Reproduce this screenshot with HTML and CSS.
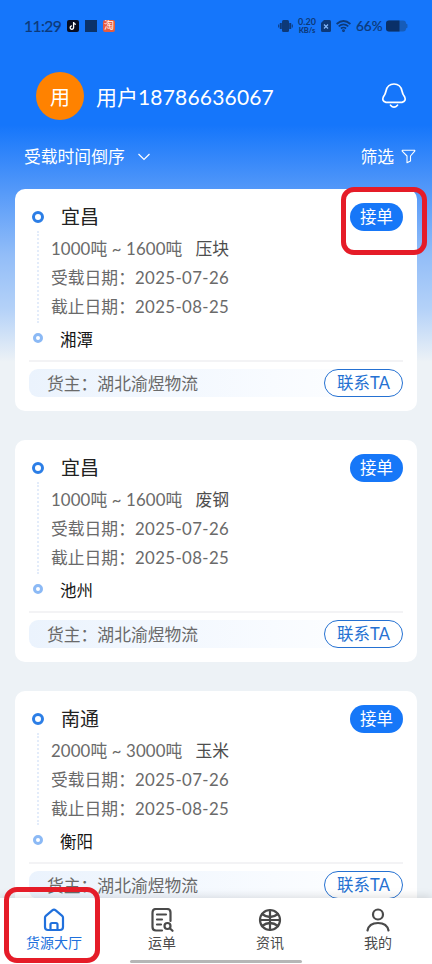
FILE: index.html
```html
<!DOCTYPE html>
<html lang="zh-CN">
<head>
<meta charset="UTF-8">
<meta name="viewport" content="width=device-width, initial-scale=1">
<title>货源大厅</title>
<link rel="stylesheet" href="styles.css">
</head>
<body>
<div class="app">
  <header class="status">
    <span class="clock">11:29</span>
    <svg class="app-icon" viewBox="0 0 12 12"><rect width="12" height="12" rx="2" fill="#080d20"/><path d="M6.600 2v5.600a1.700 1.700 0 1 1-1.600-1.700M6.600 2.400c.2 1.200 1 1.800 2.300 1.900" fill="none" stroke="#fff" stroke-width="1.300"/></svg>
    <span class="square"></span>
    <span class="shop">淘</span>
    <div class="status-right">
      <svg width="15" height="14" viewBox="0 0 15 14" fill="#0d3978"><rect x="4" y="1" width="7" height="12" rx="1.500"/><path d="M1.800 4h2v6h-2zM11.200 4h2v6h-2zM.2 5.500h1v3h-1zM13.800 5.500h1v3h-1z"/></svg>
      <span class="speed">0.20<br><b>KB/s</b></span>
      <svg class="sim" width="10" height="12" viewBox="0 0 10 12"><path d="M3 0h5.500Q10 0 10 1.500v9Q10 12 8.500 12h-7Q0 12 0 10.500V3z" fill="#0d3978"/><path d="M3 4.500l4 4m0-4l-4 4" stroke="#83b7fa" stroke-width="1.200"/></svg>
      <svg class="wifi" width="15" height="12" viewBox="0 0 15 12" fill="none" stroke="#0d3978" stroke-width="1.700"><path d="M.6 4Q7.500-2 14.400 4M2.700 6.300q4.800-4 9.600 0M4.900 8.500q2.600-2 5.200 0"/><circle cx="7.500" cy="10.600" r=".6"/></svg>
      <span class="percent">66%</span>
      <svg width="22" height="12" viewBox="0 0 22 12"><path d="M3 .5h14q3 0 3 3l1.500 1v3l-1.500 1q0 3-3 3H3q-3 0-3-3v-5q0-3 3-3z" fill="#165cb9"/><path d="M3 .5h10.500v11H3q-3 0-3-3v-5q0-3 3-3z" fill="#0a3068"/></svg>
    </div>
  </header>
  <section class="profile">
    <span class="avatar">用</span>
    <span class="username">用户<span class="digits">18786636067</span></span>
    <svg class="bell" width="26" height="28" viewBox="0 0 26 28" fill="none" stroke="#fff" stroke-width="1.700" stroke-linecap="round"><path d="M5 20.300h16q4.500-1 2.700-5.300Q21.500 12 21 9 19.500 2 13 2T5 9q-.5 3-2.700 6-1.800 4.300 2.700 5.300z"/><path d="M9.500 23.200q3.500 4 7 0"/></svg>
  </section>
  <section class="filters">
    <span>受载时间倒序</span>
    <svg class="chevron" width="12" height="8" viewBox="0 0 12 8" fill="none" stroke="#fff" stroke-width="1.200"><path d="M.5 1L6 6.500 11.500 1"/></svg>
    <span class="filter">筛选</span>
    <svg class="funnel" width="15" height="15" viewBox="0 0 15 15" fill="none" stroke="#fff" stroke-width="1.100" stroke-linejoin="round"><path d="M1.500 1.200h12q.6.400.2 1L9.500 7v5L6 13.800V7L1.200 2.200q-.3-.6.300-1z"/></svg>
  </section>
  <main class="list">
    <article class="card">
      <div class="row"><i class="dot"></i><h2>宜昌</h2><button class="accept">接单</button></div>
      <div class="details">
        <p>1000吨 ~ 1600吨<span class="goods">压块</span></p>
        <p>受载日期：<span class="date">2025-07-26</span></p>
        <p>截止日期：<span class="date">2025-08-25</span></p>
      </div>
      <div class="row end"><i class="dot light"></i><h3>湘潭</h3></div>
      <div class="owner"><span>货主：湖北渝煜物流</span><button class="contact">联系TA</button></div>
    </article>
    <article class="card">
      <div class="row"><i class="dot"></i><h2>宜昌</h2><button class="accept">接单</button></div>
      <div class="details">
        <p>1000吨 ~ 1600吨<span class="goods">废钢</span></p>
        <p>受载日期：<span class="date">2025-07-26</span></p>
        <p>截止日期：<span class="date">2025-08-25</span></p>
      </div>
      <div class="row end"><i class="dot light"></i><h3>池州</h3></div>
      <div class="owner"><span>货主：湖北渝煜物流</span><button class="contact">联系TA</button></div>
    </article>
    <article class="card">
      <div class="row"><i class="dot"></i><h2>南通</h2><button class="accept">接单</button></div>
      <div class="details">
        <p>2000吨 ~ 3000吨<span class="goods">玉米</span></p>
        <p>受载日期：<span class="date">2025-07-26</span></p>
        <p>截止日期：<span class="date">2025-08-25</span></p>
      </div>
      <div class="row end"><i class="dot light"></i><h3>衡阳</h3></div>
      <div class="owner"><span>货主：湖北渝煜物流</span><button class="contact">联系TA</button></div>
    </article>
  </main>
  <nav class="tabs">
    <a class="tab active"><svg viewBox="0 0 24 24"><path d="M3 9.500q0-1 .8-1.700L10.300 2.300q1.700-1.400 3.400 0l6.500 5.500q.8.700.8 1.700V19q0 3-3 3H6q-3 0-3-3zM8.500 22v-5.500q0-1.500 1.500-1.500h4q1.500 0 1.500 1.500V22"/></svg>货源大厅</a>
    <a class="tab"><svg viewBox="0 0 24 24"><path d="M12 22.500H6q-3.500 0-3.500-3.500V5Q2.500 1 6 1h11q3.500 0 3.500 3.500V13M7 6.500h9M7 11.500h5M7 16.500h4"/><circle cx="17.500" cy="18" r="3"/><path d="M19.800 20.300l2.700 2.500"/></svg>运单</a>
    <a class="tab"><svg viewBox="0 0 24 24"><circle cx="12" cy="12" r="10"/><path d="M12 2v20M2.500 12h19M4 6q8 6 16 0M4 18q8-6 16 0"/></svg>资讯</a>
    <a class="tab"><svg viewBox="0 0 24 24"><circle cx="12" cy="6.500" r="5"/><path d="M1.500 22.500q1.500-7.500 10.500-7.500t10.500 7.500"/></svg>我的</a>
    <span class="home-bar"></span>
  </nav>
  <span class="mark mark-accept"></span>
  <span class="mark mark-tab"></span>
</div>
</body>
</html>
```
FILE: styles.css
```css
* { box-sizing: border-box; }
body { margin: 0; font-family: Lato, "Noto Sans CJK SC", sans-serif; }
h2, h3, p { margin: 0; font-weight: 400; }
svg { display: block; flex: none; }
button { font: inherit; padding: 0; border: 0; flex: none; }

.app {
  position: relative;
  width: 432px;
  height: 964px;
  overflow: hidden;
  background: linear-gradient(#1576fb 0, #1576fb 125px, #4a93f9 180px, #92bdf8 255px, #b5d2f8 310px, #edf2f6 362px);
  display: flex;
  flex-direction: column;
}

.status { height: 52px; padding: 0 24px; display: flex; align-items: center; color: #0d3978; flex: none; }
.clock { width: 43px; padding-bottom: 1px; font-size: 15.500px; letter-spacing: -.5px; -webkit-text-stroke: .2px #0d3978; }
.clock, .percent { font-family: Lato, sans-serif; }
.app-icon { width: 12px; height: 12px; }
.square { width: 12px; height: 12px; margin: 0 6px; background: #0b3268; }
.shop { width: 12px; height: 12px; border-radius: 2px; background: #e65c3e; color: #fff; font-size: 10px; line-height: 11px; text-align: center; }
.status-right { margin-left: auto; margin-right: 0; display: flex; align-items: center; }
.speed { width: 22px; margin: 0 3px 0 3px; font-size: 9px; line-height: 8px; text-align: center; font-weight: 700; }
.speed b { font-size: 7.500px; }
.wifi { margin: 0 5px; }
.percent { width: 27px; margin-right: 3px; font-size: 13.500px; -webkit-text-stroke: .2px #0d3978; }

.profile { height: 88px; padding: 0 25px 0 36px; display: flex; align-items: center; color: #fff; flex: none; }
.avatar { width: 48px; height: 48px; border-radius: 50%; background: #ff8200; font-size: 20px; line-height: 50px; text-align: center; }
.username { margin-left: 12px; padding-top: 1px; font-size: 21px; line-height: 30px; }
.digits { letter-spacing: .18px; }
.bell { margin-left: auto; }

.filters { height: 33px; padding: 0 16px 0 24px; display: flex; align-items: center; color: #fff; font-size: 16.800px; line-height: 24px; flex: none; }
.chevron { margin-left: 13px; }
.filter { margin-left: auto; }
.funnel { margin-left: 7px; }

.list { padding: 16px 15px 0; display: grid; gap: 29px; }
.card { height: 222px; padding: 14px 14px 0; border-radius: 10px; background: #fff; overflow: hidden; }
.row { height: 28px; padding-left: 2px; display: flex; align-items: center; }
.dot { width: 12px; height: 12px; margin-left: 1px; border: 3px solid #2c7ee6; border-radius: 50%; }
.dot.light { width: 10px; height: 10px; margin: 0 1px 0 2px; border-color: #8bb9f5; }
h2 { margin-left: 17px; padding-bottom: 1px; font-size: 19px; line-height: 25px; color: #222; }
h3 { margin-left: 16px; padding-top: 1px; font-size: 16.500px; color: #161616; }
.accept { width: 53px; height: 28px; margin-left: auto; border-radius: 14px; background: #1677f8; color: #fff; font-size: 16.500px; line-height: 29px; }
.details { height: 92px; margin-left: 8px; padding: 3px 0 0 12px; border-left: 2px dotted #e3ecfa; font-size: 16.800px; line-height: 29px; color: #6a6a6a; white-space: nowrap; }
.details p:first-child { letter-spacing: .13px; }
.goods { margin-left: 13px; color: #4d4d4d; letter-spacing: 0; }
.date { letter-spacing: .4px; }
.end { height: 39px; padding-bottom: 7px; border-bottom: 2px solid #f3f3f5; }
.owner { height: 28px; margin-top: 7px; padding-left: 18px; display: flex; align-items: center; justify-content: space-between; border-radius: 9px; background: linear-gradient(90deg, #ebf3fd, #f8fbff 65%, #fff); font-size: 16.800px; color: #6a6a6a; }
.contact { width: 79px; height: 28px; border: 1px solid #2571d2; border-radius: 14px; background: #fff; color: #2571d2; font-size: 16.500px; line-height: 27px; }

.tabs { position: absolute; left: 0; right: 0; bottom: 0; height: 66px; display: grid; grid-template-columns: repeat(4, 1fr); background: #fff; box-shadow: 0 -1px 9px rgba(0, 0, 0, .14); }
.tab { display: flex; flex-direction: column; align-items: center; padding-top: 10px; font-size: 14px; line-height: 20px; color: #4a4a4a; }
.tab svg { width: 24px; height: 24px; margin-bottom: 1px; fill: none; stroke: #4a4a4a; stroke-width: 2.200; stroke-linecap: round; stroke-linejoin: round; }
.tab.active { color: #2070dc; }
.tab.active svg { stroke: #2070dc; }
.home-bar { position: absolute; left: 130px; bottom: 1px; width: 172px; height: 3px; border-radius: 2px; background: #b6b6b6; }
.mark { position: absolute; border: 5px solid #e51c28; border-radius: 13px; }
.mark-accept { left: 341px; top: 187px; width: 86px; height: 68px; }
.mark-tab { left: 4px; top: 887px; width: 96px; height: 76px; }
```
